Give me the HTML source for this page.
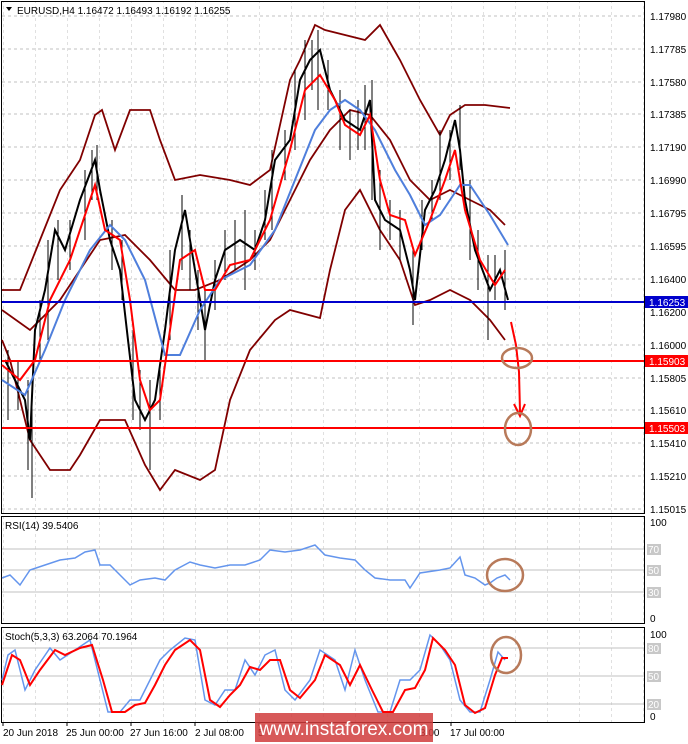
<!DOCTYPE html>
<html><head><meta charset="utf-8"><style>
html,body{margin:0;padding:0;background:#fff;}
body{width:688px;height:744px;overflow:hidden;position:relative;font-family:"Liberation Sans",sans-serif;}
svg{position:absolute;left:0;top:0;}
text{font-family:"Liberation Sans",sans-serif;font-size:10px;fill:#000;}
</style></head><body>
<svg width="688" height="744" viewBox="0 0 688 744">
<defs>
<pattern id="vg" x="3" y="0" width="32" height="744" patternUnits="userSpaceOnUse"><line x1="0" y1="0" x2="0" y2="744" stroke="#c0c0c0" stroke-dasharray="3,3"/></pattern>
</defs>
<rect x="2" y="2" width="642" height="511" fill="url(#vg)"/>
<rect x="2" y="517" width="642" height="106" fill="url(#vg)"/>
<rect x="2" y="628" width="642" height="94" fill="url(#vg)"/>
<g stroke="#c0c0c0" stroke-dasharray="3,3">
<line x1="2" y1="16" x2="644" y2="16"/><line x1="2" y1="49" x2="644" y2="49"/><line x1="2" y1="82" x2="644" y2="82"/><line x1="2" y1="114" x2="644" y2="114"/><line x1="2" y1="147" x2="644" y2="147"/><line x1="2" y1="180" x2="644" y2="180"/><line x1="2" y1="213" x2="644" y2="213"/><line x1="2" y1="246" x2="644" y2="246"/><line x1="2" y1="279" x2="644" y2="279"/><line x1="2" y1="345" x2="644" y2="345"/><line x1="2" y1="378" x2="644" y2="378"/><line x1="2" y1="410" x2="644" y2="410"/><line x1="2" y1="443" x2="644" y2="443"/><line x1="2" y1="476" x2="644" y2="476"/><line x1="2" y1="509" x2="644" y2="509"/>
</g>
<g stroke="#c0c0c0">
<line x1="2" y1="549" x2="644" y2="549"/><line x1="2" y1="570" x2="644" y2="570"/><line x1="2" y1="592" x2="644" y2="592"/>
<line x1="2" y1="648" x2="644" y2="648"/><line x1="2" y1="676" x2="644" y2="676"/><line x1="2" y1="704" x2="644" y2="704"/>
</g>
<g fill="none" stroke="#000">
<rect x="1.5" y="1.5" width="643" height="512"/>
<rect x="1.5" y="516.5" width="643" height="107"/>
<rect x="1.5" y="627.5" width="643" height="95"/>
</g>
<polyline fill="none" stroke="#800000" stroke-width="1.8" points="2,290 20,290 40,240 60,190 80,160 95,115 102,110 115,150 130,110 150,110 160,140 175,180 200,175 230,180 250,185 270,170 290,80 300,60 315,25 325,30 345,35 365,40 380,25 400,60 420,100 440,135 450,115 465,105 485,105 510,108"/>
<polyline fill="none" stroke="#800000" stroke-width="1.8" points="2,340 10,360 20,400 30,440 50,470 70,470 80,455 100,420 125,420 145,465 160,490 175,470 200,480 215,470 230,400 250,350 275,320 290,310 320,318 330,270 345,210 360,190 380,230 400,260 415,305 430,300 450,290 470,300 490,320 505,340"/>
<polyline fill="none" stroke="#800000" stroke-width="1.8" points="2,310 30,330 60,300 80,270 100,240 125,235 150,260 175,290 195,290 220,280 250,260 270,240 290,200 310,160 330,130 350,110 370,115 390,140 410,180 430,200 450,190 470,200 490,210 505,225"/>
<polyline fill="none" stroke="#000" stroke-width="2" points="5,360 15,380 25,400 30,440 35,330 45,290 55,230 65,250 80,200 95,160 100,190 110,240 120,270 128,340 135,400 145,420 155,400 165,330 175,250 185,210 195,270 205,330 215,280 225,250 240,240 255,250 265,220 275,160 290,140 300,80 310,60 320,50 330,90 345,120 360,130 370,100 375,200 385,220 400,230 410,270 415,300 425,210 435,190 445,160 455,120 460,150 465,200 475,250 490,290 500,270 508,300"/>
<g stroke="#000">
<line x1="8" y1="350" x2="8" y2="420"/><line x1="18" y1="360" x2="18" y2="410"/><line x1="28" y1="380" x2="28" y2="470"/><line x1="32" y1="400" x2="32" y2="498"/><line x1="40" y1="300" x2="40" y2="360"/><line x1="48" y1="240" x2="48" y2="340"/><line x1="58" y1="220" x2="58" y2="280"/><line x1="70" y1="220" x2="70" y2="270"/><line x1="85" y1="170" x2="85" y2="240"/><line x1="92" y1="150" x2="92" y2="200"/><line x1="97" y1="145" x2="97" y2="200"/><line x1="112" y1="220" x2="112" y2="270"/><line x1="122" y1="240" x2="122" y2="300"/><line x1="133" y1="330" x2="133" y2="420"/><line x1="140" y1="370" x2="140" y2="430"/><line x1="150" y1="380" x2="150" y2="470"/><line x1="160" y1="370" x2="160" y2="420"/><line x1="170" y1="250" x2="170" y2="340"/><line x1="182" y1="195" x2="182" y2="270"/><line x1="190" y1="230" x2="190" y2="290"/><line x1="198" y1="270" x2="198" y2="330"/><line x1="205" y1="290" x2="205" y2="360"/><line x1="215" y1="260" x2="215" y2="310"/><line x1="225" y1="230" x2="225" y2="280"/><line x1="235" y1="220" x2="235" y2="270"/><line x1="245" y1="210" x2="245" y2="290"/><line x1="255" y1="230" x2="255" y2="270"/><line x1="265" y1="190" x2="265" y2="240"/><line x1="272" y1="150" x2="272" y2="230"/><line x1="285" y1="130" x2="285" y2="180"/><line x1="295" y1="70" x2="295" y2="150"/><line x1="305" y1="40" x2="305" y2="120"/><line x1="312" y1="40" x2="312" y2="90"/><line x1="318" y1="30" x2="318" y2="110"/><line x1="328" y1="60" x2="328" y2="110"/><line x1="340" y1="90" x2="340" y2="150"/><line x1="350" y1="110" x2="350" y2="160"/><line x1="358" y1="100" x2="358" y2="150"/><line x1="365" y1="85" x2="365" y2="150"/><line x1="372" y1="80" x2="372" y2="200"/><line x1="380" y1="170" x2="380" y2="250"/><line x1="390" y1="200" x2="390" y2="240"/><line x1="400" y1="210" x2="400" y2="260"/><line x1="413" y1="250" x2="413" y2="325"/><line x1="422" y1="200" x2="422" y2="250"/><line x1="432" y1="180" x2="432" y2="220"/><line x1="440" y1="130" x2="440" y2="200"/><line x1="450" y1="130" x2="450" y2="180"/><line x1="460" y1="105" x2="460" y2="170"/><line x1="470" y1="180" x2="470" y2="260"/><line x1="478" y1="230" x2="478" y2="290"/><line x1="488" y1="255" x2="488" y2="340"/><line x1="495" y1="255" x2="495" y2="300"/><line x1="505" y1="250" x2="505" y2="310"/>
</g>
<polyline fill="none" stroke="#4f7fdc" stroke-width="2" points="2,380 25,395 45,350 65,300 90,250 110,225 125,240 145,280 165,355 180,355 200,310 220,280 250,265 275,230 295,180 315,130 330,110 345,100 360,110 375,130 395,170 410,195 425,225 440,215 460,185 470,185 490,215 508,245"/>
<polyline fill="none" stroke="#f00" stroke-width="2" points="2,365 20,380 35,360 50,300 70,260 95,185 105,230 120,240 130,300 140,380 150,410 160,400 170,330 180,260 195,250 205,290 215,290 230,265 250,260 270,220 290,150 305,90 320,75 335,100 345,125 360,135 370,115 380,180 390,215 405,220 415,255 430,220 445,180 455,150 465,210 480,260 495,285 505,270"/>
<line x1="2" y1="302" x2="644" y2="302" stroke="#0000cc" stroke-width="2"/>
<line x1="2" y1="361" x2="644" y2="361" stroke="#f00" stroke-width="2"/>
<line x1="2" y1="428" x2="644" y2="428" stroke="#f00" stroke-width="2"/>
<path d="M511,322 L516,345 L519,372 L520,412" fill="none" stroke="#f00" stroke-width="2"/>
<path d="M514,404 L520,416 L525,404" fill="none" stroke="#f00" stroke-width="2"/>
<ellipse cx="517" cy="358" rx="15" ry="10" fill="none" stroke="#b87a5a" stroke-width="2.5"/>
<ellipse cx="518" cy="429" rx="13" ry="16" fill="none" stroke="#b87a5a" stroke-width="2.5"/>
<polyline fill="none" stroke="#6495ed" stroke-width="1.5" points="2,578 10,575 20,585 30,570 45,565 60,560 75,558 85,552 95,550 100,565 110,565 120,575 130,585 140,580 155,578 165,580 175,570 190,562 200,565 215,568 230,565 245,565 260,560 270,550 285,552 300,550 315,545 325,555 340,558 355,560 365,570 375,578 390,580 405,580 410,588 420,573 440,570 450,568 460,557 465,575 475,578 485,585 490,583 497,578 505,575 510,580"/>
<ellipse cx="505" cy="575" rx="18" ry="16" fill="none" stroke="#b87a5a" stroke-width="2.5"/>
<polyline fill="none" stroke="#6495ed" stroke-width="1.5" points="2,680 8,655 15,650 25,690 35,670 50,648 60,660 75,650 90,640 100,680 108,712 120,712 130,700 140,700 150,680 160,660 170,650 185,638 195,640 205,700 215,705 225,690 235,690 245,660 255,675 265,655 275,650 285,690 295,700 310,680 320,650 335,660 345,690 355,650 365,680 378,712 390,712 400,680 410,680 420,670 430,635 440,645 450,660 460,700 470,712 480,712 490,680 498,652 505,660"/>
<polyline fill="none" stroke="#f00" stroke-width="2" points="2,685 12,655 20,660 30,685 40,670 55,650 65,655 80,648 92,645 103,680 112,712 125,712 135,705 145,703 155,685 165,665 175,650 190,640 200,650 210,700 220,707 230,695 240,685 250,667 260,670 270,660 280,660 290,690 300,698 315,680 325,655 340,665 350,685 360,665 372,690 383,712 393,712 405,690 415,688 425,670 433,638 445,650 455,665 465,705 475,713 485,708 495,675 502,658 508,658"/>
<ellipse cx="506" cy="655" rx="15" ry="18" fill="none" stroke="#b87a5a" stroke-width="2.5"/>
<path d="M6,7 L12,7 L9,11 Z" fill="#000"/>
<text x="17" y="14" font-size="10">EURUSD,H4  1.16472 1.16493 1.16192 1.16255</text>
<text x="5" y="529">RSI(14) 39.5406</text>
<text x="5" y="640">Stoch(5,3,3) 63.2064 70.1964</text>
<g font-size="10">
<text x="650" y="20">1.17980</text><text x="650" y="53">1.17785</text><text x="650" y="86">1.17580</text><text x="650" y="118">1.17385</text><text x="650" y="151">1.17190</text><text x="650" y="184">1.16990</text><text x="650" y="217">1.16795</text><text x="650" y="250">1.16595</text><text x="650" y="283">1.16400</text><text x="650" y="316">1.16200</text><text x="650" y="349">1.16000</text><text x="650" y="382">1.15805</text><text x="650" y="414">1.15610</text><text x="650" y="447">1.15410</text><text x="650" y="480">1.15210</text><text x="650" y="513">1.15015</text>
</g>
<rect x="645" y="296" width="43" height="12" fill="#0000cc"/><text x="649" y="306" style="fill:#fff">1.16253</text>
<rect x="645" y="355" width="43" height="12" fill="#f00"/><text x="649" y="365" style="fill:#fff">1.15903</text>
<rect x="645" y="422" width="43" height="12" fill="#f00"/><text x="649" y="432" style="fill:#fff">1.15503</text>
<text x="650" y="526">100</text>
<rect x="647" y="544" width="14" height="11" fill="#c8c8c8"/><text x="648" y="553" style="fill:#fff">70</text>
<rect x="647" y="565" width="14" height="11" fill="#c8c8c8"/><text x="648" y="574" style="fill:#fff">50</text>
<rect x="647" y="587" width="14" height="11" fill="#c8c8c8"/><text x="648" y="596" style="fill:#fff">30</text>
<text x="650" y="622">0</text>
<text x="650" y="638">100</text>
<rect x="647" y="643" width="14" height="11" fill="#c8c8c8"/><text x="648" y="652" style="fill:#fff">80</text>
<rect x="647" y="671" width="14" height="11" fill="#c8c8c8"/><text x="648" y="680" style="fill:#fff">50</text>
<rect x="647" y="699" width="14" height="11" fill="#c8c8c8"/><text x="648" y="708" style="fill:#fff">20</text>
<text x="650" y="720">0</text>
<g stroke="#000"><line x1="3" y1="722" x2="3" y2="726"/><line x1="67" y1="722" x2="67" y2="726"/><line x1="131" y1="722" x2="131" y2="726"/><line x1="195" y1="722" x2="195" y2="726"/><line x1="259" y1="722" x2="259" y2="726"/><line x1="451" y1="722" x2="451" y2="726"/></g>
<text x="3" y="736">20 Jun 2018</text><text x="66" y="736">25 Jun 00:00</text><text x="130" y="736">27 Jun 16:00</text><text x="195" y="736">2 Jul 08:00</text><text x="258" y="736">5</text><text x="420" y="736">3:00</text><text x="450" y="736">17 Jul 00:00</text>
<rect x="255" y="713" width="178" height="29" fill="#d03c3c" opacity="0.85"/>
<text x="344" y="735" text-anchor="middle" style="fill:#fff;font-size:19px">www.instaforex.com</text>
</svg>
</body></html>
